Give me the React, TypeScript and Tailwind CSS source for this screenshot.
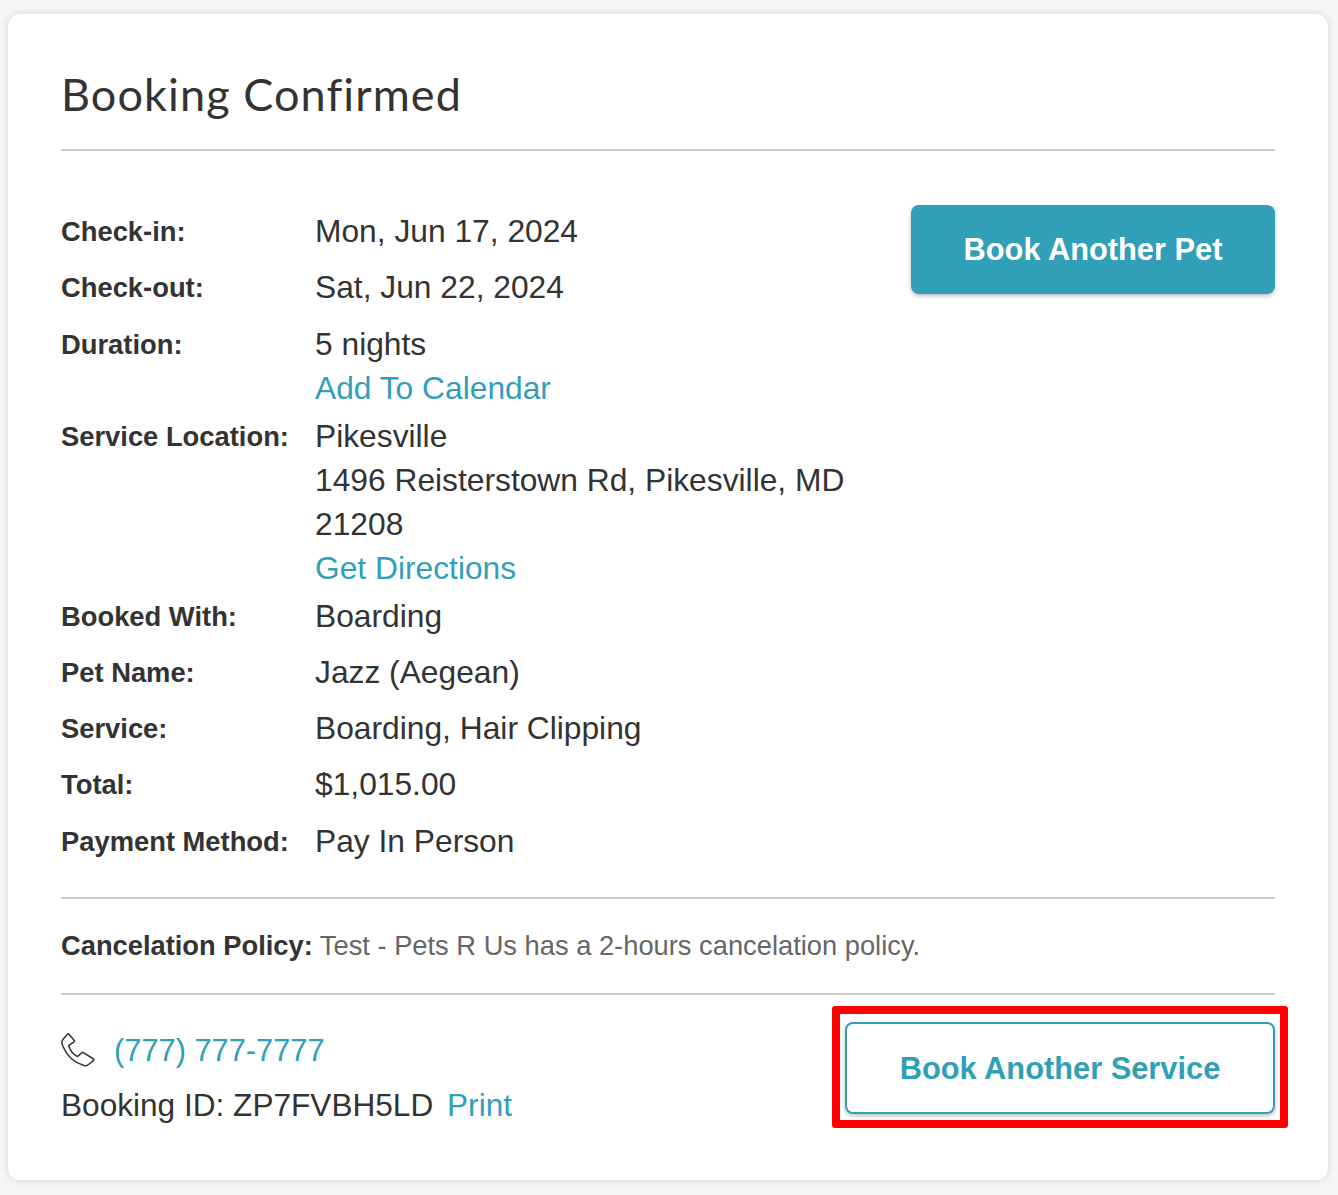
import React from 'react'

const Row = ({ label, children }: { label: string; children: React.ReactNode }) => (
  <div className="flex min-h-[56.25px] pb-1">
    <div className="w-[254px] shrink-0 pt-px text-[27.35px] font-bold leading-[44px]">{label}</div>
    <div className="flex-1 text-[31.75px] leading-[44px]">{children}</div>
  </div>
)

const TextLink = ({ children }: { children: React.ReactNode }) => (
  <a className="text-[#319fb7]">{children}</a>
)

// thin outlined handset, earpiece top left and mouthpiece bottom right
const PhoneIcon = () => (
  <svg viewBox="0 0 34 34" className="h-[34px] w-[34px]" fill="none" stroke="#333" strokeWidth="1.5" strokeLinejoin="round">
    <path d="M6.5 1.2 L1.8 6.5 C0.6 8 1 11 2 13.5 C6 23 14 30 23 32.5 C25 33 26.5 32.5 27.5 31.5 L32.6 27.4 C33 27 33 26.4 32.5 26 L22.4 19.6 C22 19.3 21.5 19.3 21 19.7 L16.4 23.6 C12 21.5 9 17 7.6 12.6 L13 8.8 C13.5 8.4 13.6 8 13.3 7.5 L8 1.2 C7.6 0.7 7 0.7 6.5 1.2 Z" />
  </svg>
)

export default function App() {
  return (
    <div className="min-h-[1195px] bg-[#f6f6f6] pt-[14px] pl-2 pr-[10px] font-['Liberation_Sans',Arial,sans-serif] text-[#333]">
      <div className="h-[1166px] rounded-xl bg-white px-[53px] shadow-[0_0_8px_rgba(0,0,0,0.14)]">
        <h1 className="h-[137px] border-b-2 border-[#ccc] pt-[51px] font-['Lato',sans-serif] text-[45px] leading-[58px] font-normal tracking-[1.1px]">
          Booking Confirmed
        </h1>

        <div className="flex h-[748px] border-b-2 border-[#ccc] pt-[58px]">
          <div className="w-[800px]">
            <Row label="Check-in:">Mon, Jun 17, 2024</Row>
            <Row label="Check-out:">Sat, Jun 22, 2024</Row>
            <Row label="Duration:">
              <div>5 nights</div>
              <TextLink>Add To Calendar</TextLink>
            </Row>
            <Row label="Service Location:">
              <div>Pikesville</div>
              <div>1496 Reisterstown Rd, Pikesville, MD 21208</div>
              <TextLink>Get Directions</TextLink>
            </Row>
            <Row label="Booked With:">Boarding</Row>
            <Row label="Pet Name:">Jazz (Aegean)</Row>
            <Row label="Service:">Boarding, Hair Clipping</Row>
            <Row label="Total:">$1,015.00</Row>
            <Row label="Payment Method:">Pay In Person</Row>
          </div>
          <button className="ml-auto -mt-[4px] h-[89px] w-[364px] rounded-lg bg-[#319fb7] pt-[2px] text-[30.8px] font-bold text-white shadow-[0_2px_4px_rgba(0,0,0,0.25)]">
            Book Another Pet
          </button>
        </div>

        <div className="flex h-[96px] items-center border-b-2 border-[#ccc] text-[27.3px]">
          <span className="font-bold">Cancelation Policy:</span>
          <span className="ml-[7px] text-[#666]">Test - Pets R Us has a 2-hours cancelation policy.</span>
        </div>

        <div className="flex items-start justify-between pt-[27px]">
          <div className="leading-[44px]">
            <div className="flex h-[56px] items-center gap-[19px] text-[30.8px]">
              <PhoneIcon />
              <span className="mt-[2px]"><TextLink>(777) 777-7777</TextLink></span>
            </div>
            <div className="mt-[5px] text-[31.6px]">
              Booking ID: ZP7FVBH5LD <span className="ml-[5px]"><TextLink>Print</TextLink></span>
            </div>
          </div>

          <div className="relative">
            <button className="h-[92px] w-[430px] rounded-lg border-2 border-[#319fb7] bg-white pt-[2px] text-[30.8px] font-bold text-[#319fb7] shadow-[0_2px_4px_rgba(0,0,0,0.25)]">
              Book Another Service
            </button>
            <div className="pointer-events-none absolute -top-4 -right-[13px] -bottom-[14px] -left-[13px] rounded-[3px] border-8 border-[#ff0000]" />
          </div>
        </div>
      </div>
    </div>
  )
}
